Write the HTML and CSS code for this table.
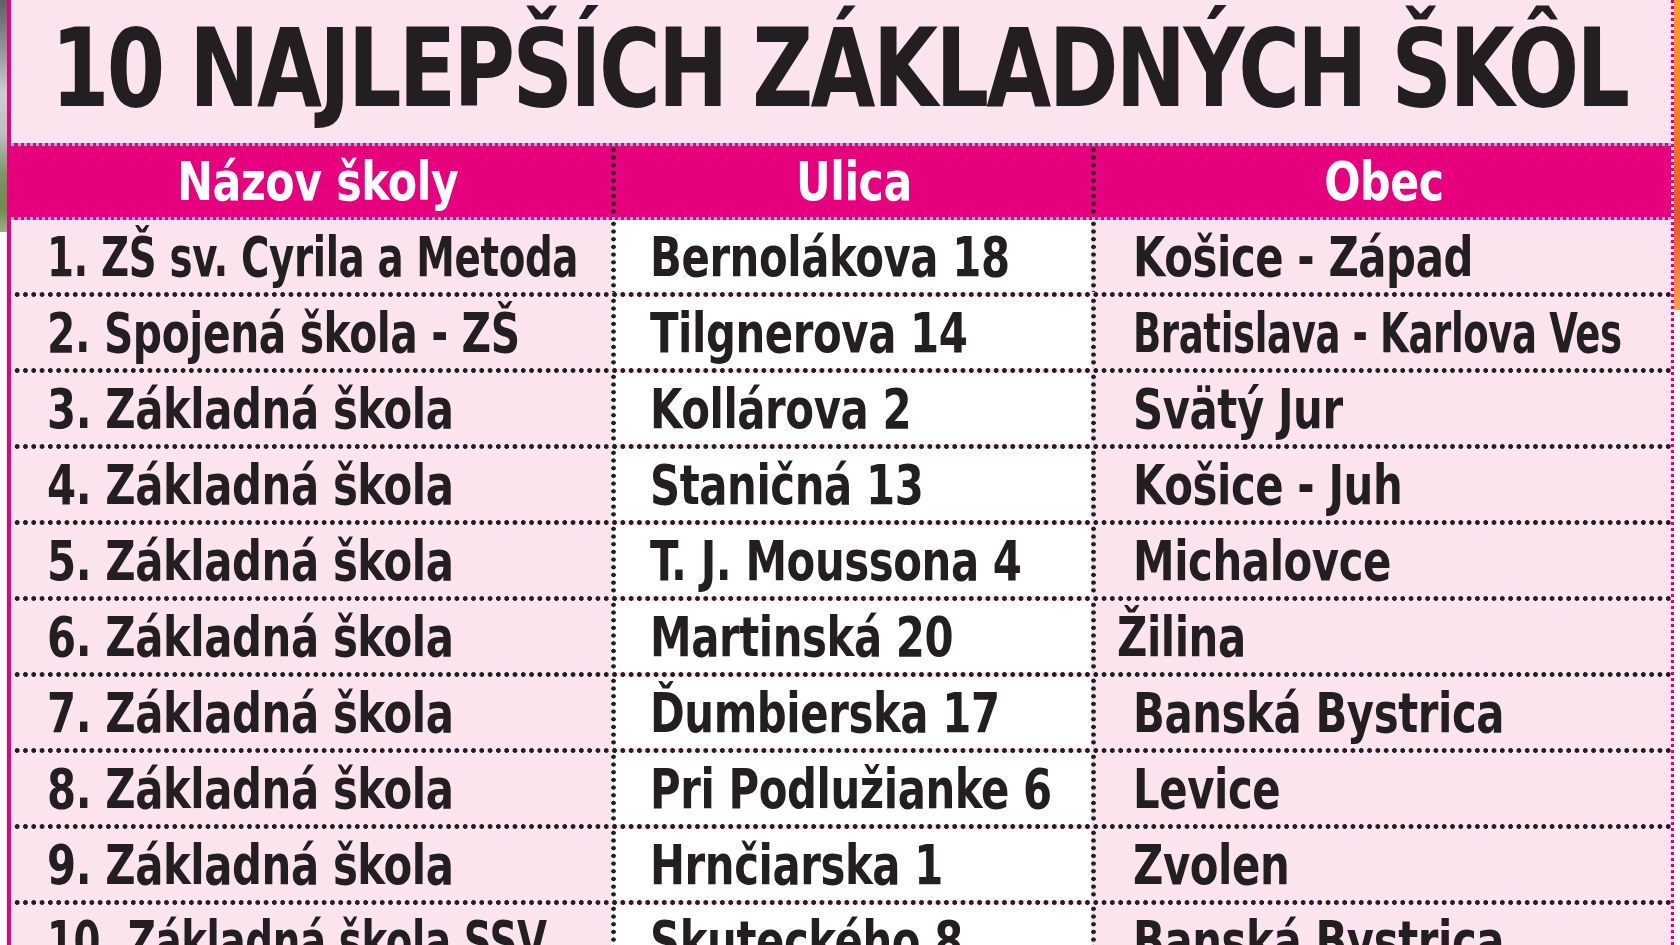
FILE: index.html
```html
<!DOCTYPE html>
<html lang="sk">
<head>
<meta charset="utf-8">
<title>10 najlepších základných škôl</title>
<link rel="stylesheet" href="styles.css">
</head>
<body>
<div class="page">
  <div class="photo-strip"></div>
  <div class="edge-line"></div>
  <main class="board">
    <h1 class="title"><span class="t">10 NAJLEPŠÍCH ZÁKLADNÝCH ŠKÔL</span></h1>
    <div class="table">
      <div class="row head">
        <div class="cell c1"><span class="t">Názov školy</span></div>
        <div class="cell c2"><span class="t">Ulica</span></div>
        <div class="cell c3"><span class="t">Obec</span></div>
      </div>
      <div class="row first">
        <div class="cell c1"><span class="t narrow">1. ZŠ sv. Cyrila a Metoda</span></div>
        <div class="cell c2"><span class="t">Bernolákova 18</span></div>
        <div class="cell c3"><span class="t">Košice - Západ</span></div>
      </div>
      <div class="row">
        <div class="cell c1"><span class="t semi">2. Spojená škola - ZŠ</span></div>
        <div class="cell c2"><span class="t">Tilgnerova 14</span></div>
        <div class="cell c3"><span class="t narrower">Bratislava - Karlova Ves</span></div>
      </div>
      <div class="row">
        <div class="cell c1"><span class="t">3. Základná škola</span></div>
        <div class="cell c2"><span class="t">Kollárova 2</span></div>
        <div class="cell c3"><span class="t">Svätý Jur</span></div>
      </div>
      <div class="row">
        <div class="cell c1"><span class="t">4. Základná škola</span></div>
        <div class="cell c2"><span class="t">Staničná 13</span></div>
        <div class="cell c3"><span class="t">Košice - Juh</span></div>
      </div>
      <div class="row">
        <div class="cell c1"><span class="t">5. Základná škola</span></div>
        <div class="cell c2"><span class="t">T. J. Moussona 4</span></div>
        <div class="cell c3"><span class="t">Michalovce</span></div>
      </div>
      <div class="row">
        <div class="cell c1"><span class="t">6. Základná škola</span></div>
        <div class="cell c2"><span class="t">Martinská 20</span></div>
        <div class="cell c3 tight"><span class="t">Žilina</span></div>
      </div>
      <div class="row">
        <div class="cell c1"><span class="t">7. Základná škola</span></div>
        <div class="cell c2"><span class="t">Ďumbierska 17</span></div>
        <div class="cell c3"><span class="t">Banská Bystrica</span></div>
      </div>
      <div class="row">
        <div class="cell c1"><span class="t">8. Základná škola</span></div>
        <div class="cell c2"><span class="t">Pri Podlužianke 6</span></div>
        <div class="cell c3"><span class="t">Levice</span></div>
      </div>
      <div class="row">
        <div class="cell c1"><span class="t">9. Základná škola</span></div>
        <div class="cell c2"><span class="t">Hrnčiarska 1</span></div>
        <div class="cell c3"><span class="t">Zvolen</span></div>
      </div>
      <div class="row">
        <div class="cell c1"><span class="t narrow">10. Základná škola SSV</span></div>
        <div class="cell c2"><span class="t">Skuteckého 8</span></div>
        <div class="cell c3"><span class="t">Banská Bystrica</span></div>
      </div>
    </div>
  </main>
  <div class="orange-strip"></div>
</div>
</body>
</html>
```
FILE: styles.css
```css
* { box-sizing: border-box; }
html, body {
  margin: 0;
  padding: 0;
  background: #ffffff;
  overflow: hidden;
}
body {
  font-family: "DejaVu Sans Condensed", "DejaVu Sans", "Liberation Sans", sans-serif;
  color: #231f20;
}
.page {
  display: grid;
  grid-template-columns: 7px 4px 1fr 6px;
  height: 945px;
  overflow: hidden;
}
.photo-strip {
  height: 232px;
  background: linear-gradient(180deg, #5d6268 0%, #8c9298 20%, #c9ced2 40%, #b9c0bd 58%, #7d9562 75%, #6f8a4e 90%, #9bb08a 100%);
}
.edge-line {
  background: #e6007e;
}
.board {
  background: #fbe4ee;
  border-right: 3px dotted #e6007e;
  min-width: 0;
}
.t {
  display: inline-block;
  white-space: nowrap;
  transform-origin: 0 50%;
}
.title {
  margin: 0;
  height: 143px;
  padding: 15px 0 0 40px;
  font-size: 108px;
  font-weight: 700;
  line-height: 1;
  letter-spacing: -3px;
  white-space: nowrap;
}
.title .t { transform: scaleX(0.864); }
.table {
  display: flex;
  flex-direction: column;
}
.row {
  display: grid;
  grid-template-columns: 600px 480px 1fr;
  height: 76px;
  border-bottom: 5px solid transparent;
  background-image: radial-gradient(circle at 50% 50%, #231f20 0, #231f20 2.1px, rgba(35, 31, 32, 0) 2.7px);
  background-size: 8.3px 5px;
  background-repeat: repeat-x;
  background-origin: border-box;
  background-position: 2px 100%;
}
.row.first { height: 77px; }
.cell {
  display: flex;
  align-items: center;
  font-size: 56px;
  font-weight: 700;
  white-space: nowrap;
  letter-spacing: -0.5px;
  min-width: 0;
}
.cell .t { transform: scaleX(0.83); }
.cell .t.semi { transform: scaleX(0.81); }
.cell .t.narrow { transform: scaleX(0.77); }
.cell .t.narrower { transform: scaleX(0.735); }
.cell.c2,
.cell.c3 {
  border-left: 5px solid transparent;
  background-image: radial-gradient(circle at 50% 50%, #231f20 0, #231f20 2px, rgba(35, 31, 32, 0) 2.6px);
  background-size: 5px 7.7px;
  background-repeat: repeat-y;
  background-origin: border-box;
  background-position: 0 0;
}
.cell.c1 { padding-left: 36px; }
.cell.c2 {
  background-color: #ffffff;
  padding-left: 34px;
}
.cell.c3 {
  padding-left: 37px;
}
.cell.c3.tight { padding-left: 21px; }
.row.head {
  height: 77px;
  background-color: #e6007e;
  background-image: none;
  border-top: 3px dotted #6cc9da;
  border-bottom: 3px dotted #6cc9da;
}
.row.head .cell {
  justify-content: center;
  padding-left: 0;
  color: #ffffff;
  background-color: transparent;
  font-size: 54px;
}
.row.head .cell.c1 { padding-left: 14px; }
.row.head .cell .t {
  transform-origin: 50% 50%;
  transform: scaleX(0.88);
}
.orange-strip {
  height: 310px;
  background: linear-gradient(180deg, #f7a12c 0%, #ef7f22 40%, #e2572a 70%, #f2a54a 100%);
}
```
